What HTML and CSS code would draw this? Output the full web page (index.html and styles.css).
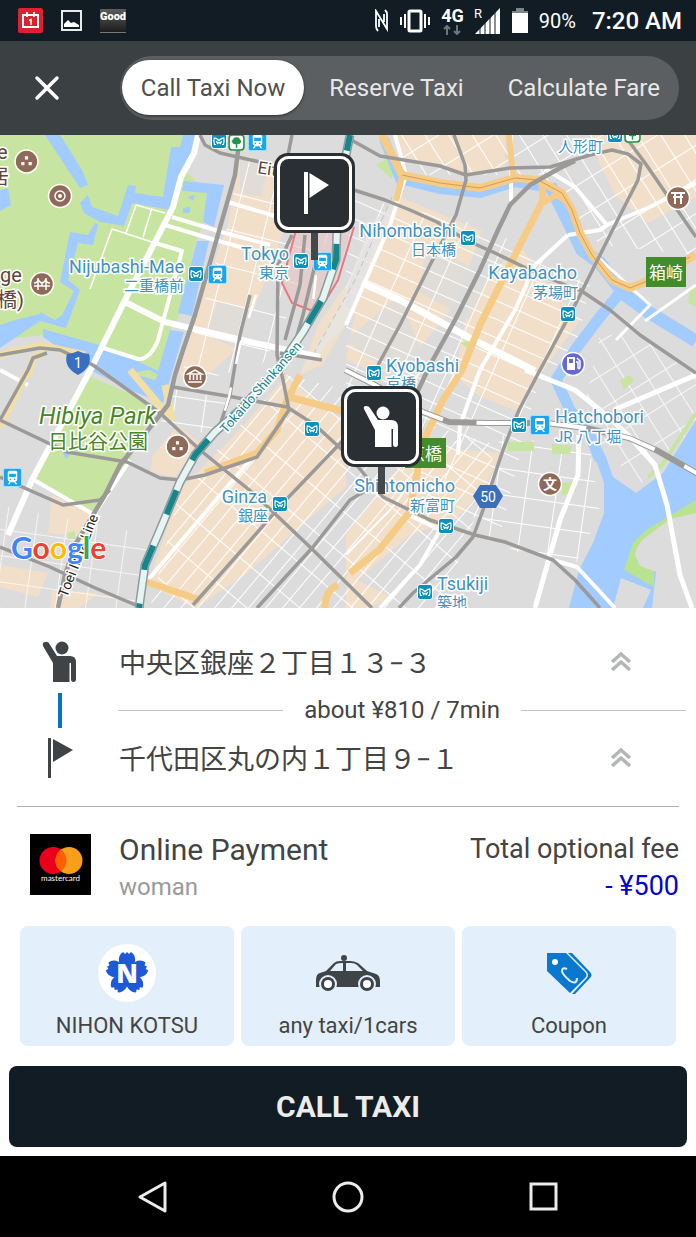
FILE: index.html
```html
<!DOCTYPE html>
<html lang="en">
<head>
  <meta charset="UTF-8" />
  <meta name="viewport" content="width=device-width, initial-scale=1.0">
  <title>Call Taxi</title>

  <link rel="stylesheet" href="styles.css">
</head>
<body>

  <!-- Status bar -->
  <div class="status-bar">
    <div class="status-group">
      <svg width="25" height="25" viewBox="0 0 25 25">
        <rect width="25" height="25" rx="2" fill="#e0202f"/>
        <path d="M5 7H20V19H5ZM9 4V9M16 4V9" fill="none" stroke="#fff" stroke-width="2"/>
        <path d="M11 12.500L13 11.500V17" fill="none" stroke="#fff" stroke-width="1.500"/>
      </svg>
      <svg width="21" height="21" viewBox="0 0 21 21">
        <rect x="1" y="1" width="19" height="19" fill="none" stroke="#e6ebee" stroke-width="2"/>
        <path d="M3 17V14L7 10L10 13L13 12L18 15V17Z" fill="#fff"/>
      </svg>
      <span class="good-app">Good</span>
    </div>
    <div class="status-group status-right">
      <svg width="14" height="23" viewBox="0 0 14 23">
        <path d="M3 22Q1 20 1 17V2L12 20V5Q12 3 10 1M4 10V18M9 13V5" fill="none" stroke="#fff" stroke-width="1.800"/>
      </svg>
      <svg width="32" height="24" viewBox="0 0 32 24">
        <rect x="10" y="2" width="12" height="20" rx="1" fill="none" stroke="#fff" stroke-width="3"/>
        <path d="M6 5V19M2 8V16M26 5V19M30 8V16" stroke="#fff" stroke-width="2"/>
      </svg>
      <div class="network">
        <span>4G</span>
        <svg width="20" height="10" viewBox="0 0 20 10">
          <path d="M5 10V1M2 4L5 1L8 4M15 0V9M12 6L15 9L18 6" fill="none" stroke="#6d767c" stroke-width="2"/>
        </svg>
      </div>
      <svg class="signal" width="27" height="26" viewBox="0 0 27 26">
        <path d="M1 26L26 0V26Z" fill="#fff"/>
        <path d="M6 19V26M11 14V26M16 9V26M21 4V26" stroke="#111c24"/>
        <text class="signal-roaming" x="0" y="10">R</text>
      </svg>
      <svg width="18" height="25" viewBox="0 0 18 25">
        <path d="M5 0H13V3H17V25H1V3H5Z" fill="#fff"/>
        <path d="M5 0H13V3H17V5H1V3H5Z" fill="#7d868b"/>
      </svg>
      <span class="battery">90%</span>
      <span class="clock">7:20 AM</span>
    </div>
  </div>

  <!-- Header tabs -->
  <header class="header">
    <button type="button" class="close-btn" aria-label="Close">
      <svg width="26" height="26" viewBox="0 0 26 26">
        <path d="M3 3L23 23M23 3L3 23" stroke="#fff" stroke-width="3.500" stroke-linecap="round"/>
      </svg>
    </button>
    <nav class="tabs">
      <button type="button" class="tab active">Call Taxi Now</button>
      <button type="button" class="tab">Reserve Taxi</button>
      <button type="button" class="tab">Calculate Fare</button>
    </nav>
  </header>

  <!-- Map -->
  <div class="map">
    <svg viewBox="0 0 696 473">
      <defs>
        <pattern id="gridGinza" width="34" height="13" patternUnits="userSpaceOnUse" patternTransform="rotate(-50)">
          <path d="M0 0H34M0 0V13" stroke="#fff" stroke-width="2" fill="none"/>
        </pattern>
        <pattern id="gridEast" width="42" height="17" patternUnits="userSpaceOnUse" patternTransform="rotate(24)">
          <path d="M0 0H42M0 0V17" stroke="#fff" stroke-width="2" fill="none"/>
        </pattern>
        <pattern id="gridWest" width="31" height="36" patternUnits="userSpaceOnUse" patternTransform="rotate(14)">
          <path d="M0 0H31M0 0V36" stroke="#fff" stroke-width="2" fill="none"/>
        </pattern>
        <pattern id="gridNorth" width="20" height="29" patternUnits="userSpaceOnUse" patternTransform="rotate(-32)">
          <path d="M0 0H20M0 0V29" stroke="#fff" stroke-width="2" fill="none"/>
        </pattern>
        <pattern id="gridSouth" width="30" height="26" patternUnits="userSpaceOnUse" patternTransform="rotate(8)">
          <path d="M0 0H30M0 0V26" stroke="#fff" stroke-width="2" fill="none"/>
        </pattern>
        <symbol id="metro" viewBox="0 0 16 16">
          <rect x=".5" y=".5" width="15" height="15" rx="2.500" fill="#0c90bd" stroke="#fff"/>
          <path d="M5 11.500H3.500Q2.600 7 3.200 4.800Q5.500 4.800 8 7.500Q10.500 4.800 12.800 4.800Q13.400 7 12.500 11.500H11M5.500 8L6.500 10.500L8 9.500L9.500 10.500L10.500 8" fill="none" stroke="#fff" stroke-width="1.200"/>
        </symbol>
        <symbol id="train" viewBox="0 0 20 20">
          <rect x=".5" y=".5" width="19" height="19" rx="2" fill="#1aa5f0" stroke="#a9defa"/>
          <path d="M5 5Q5 3 7 3H13Q15 3 15 5V12Q15 14 13 14L15 17H13L12 15H8L7 17H5L7 14Q5 14 5 12Z" fill="#fff"/>
          <path d="M6.500 6H13.500V9.500H6.500ZM7 11.300H8.500V12.500H7ZM11.500 11.300H13V12.500H11.500Z" fill="#1aa5f0"/>
        </symbol>
        <symbol id="tree" viewBox="0 0 16 16">
          <rect x="1" y="1" width="14" height="14" rx="3" fill="#fff" stroke="#219447" stroke-width="1.500"/>
          <path d="M8 3Q11 3 11 5Q13 6 12 8Q11 10 8.700 9.500V13H7.300V9.500Q5 10 4 8Q3 6 5 5Q5 3 8 3Z" fill="#219447"/>
        </symbol>
        <symbol id="dots" viewBox="0 0 24 24">
          <circle cx="12" cy="12" r="11" fill="#8f6a58" stroke="#fff" stroke-width="1.500"/>
          <path d="M10.500 7H13.500V10H10.500ZM7 12.500H10V15.500H7ZM14 12.500H17V15.500H14Z" fill="#fff"/>
        </symbol>
      </defs>

      <!-- Land -->
      <rect width="696" height="473" fill="#dcdcdc"/>
      <g fill="#f1dfc9">
        <path d="M240 20L300 32L282 100L262 155L235 215L203 245L178 240L205 150L228 90Z"/>
        <path d="M180 355L235 300L287 240L310 262L346 290V352L296 395L245 440L196 473L148 450Z"/>
        <path d="M395 60L482 96L455 170L420 212L380 240L346 225L360 150Z"/>
        <path d="M392 0H505V34L466 39L400 22Z"/>
        <path d="M346 190L322 230L300 240L318 190L346 150Z"/>
        <path d="M590 0H696V62L648 88L615 60L600 30Z"/>
        <path d="M470 160L520 110L548 150L580 185L540 240L520 277L480 262L455 240Z"/>
        <path d="M392 340L432 312L500 318L486 350L455 385L410 400L346 455V400Z"/>
        <path d="M0 430L48 438L38 462L0 452ZM52 360L92 378L86 402L48 398ZM52 455L98 458L80 473H50Z"/>
        <path d="M153 320L178 290L200 308L175 342L150 337Z"/>
        <path d="M346 440L392 462L370 473H346Z"/>
      </g>
      <path d="M425 112L490 140L470 185L420 158ZM346 205L400 160L420 212L385 235ZM240 25L270 20L262 62L240 58ZM262 180L240 215L205 200L218 165Z" fill="#dcdcdc" opacity=".8"/>

      <!-- Minor streets -->
      <path d="M240 20L300 32L340 80L262 230L178 250L228 90Z" fill="url(#gridWest)"/>
      <path d="M180 355L287 240L346 255V473H150Z" fill="url(#gridGinza)"/>
      <path d="M346 60L482 90L590 150L575 220L540 240L500 400L346 300Z" fill="url(#gridEast)"/>
      <path d="M380 0H696V120L600 110L540 40L400 40Z" fill="url(#gridNorth)"/>
      <path d="M346 320L430 290L496 310L480 370L440 473H346Z" fill="url(#gridGinza)"/>
      <path d="M500 300L590 315L600 378L570 440L480 400Z" fill="url(#gridSouth)"/>
      <path d="M600 200L640 200L696 240V290L640 350L580 290Z" fill="url(#gridNorth)" opacity=".8"/>
      <path d="M0 370L150 400L140 473H0Z" fill="url(#gridSouth)" opacity=".7"/>
      <path d="M170 250L230 260L215 300L160 290Z" fill="url(#gridSouth)"/>

      <!-- Parks -->
      <g fill="#c7e5a0">
        <path d="M0 0H198L185 35L207 58L203 88L195 110L180 180L170 195L158 238L100 222L43 200L0 205Z"/>
        <path d="M87 240L155 270L130 325L92 378L32 345Z"/>
        <path d="M508 307H534V316H508ZM552 309L572 311L570 319H552ZM562 348L576 346V357L562 360ZM620 245L630 240L634 246L624 254ZM67 398L75 396V404L68 404ZM690 155L696 150V172L688 168ZM376 30L392 44L394 34L386 24ZM460 207L474 205L468 214Z"/>
      </g>

      <!-- Water -->
      <g fill="#a2cbff">
        <path d="M183 0H198L192 20L180 45L170 75L132 68L124 91L100 87L84 78L80 68L88 60L92 72L118 81L128 50L136 51L135 58L163 62L171 12L180 12Z"/>
        <path d="M45 0H60L82 35L88 50L80 53L70 38Z"/>
        <path d="M184 46L224 50L214 92L203 87L207 58L182 56ZM197 106L209 106L192 181L178 178ZM170 195L184 197L163 268L130 255L92 236L43 202V194L110 213L158 236Z"/>
        <path d="M0 190L40 177L55 185L62 180L74 156L60 147L70 97L88 100L95 88L98 90L93 110L78 108L68 145L80 155L66 193L40 186L0 213Z"/>
        <path d="M0 55L8 53L11 70L0 76ZM187 62L195 60L193 66ZM183 73L190 72V78H183ZM63 318L75 315L66 324Z"/>
        <path d="M583 300L596 325L604 348V378L593 408L579 435L569 473H696V285L663 338L636 358L613 342L606 322L590 290Z"/>
      </g>
      <g fill="none" stroke="#a2cbff">
        <path d="M550 50L570 90L582 115L600 128L625 160L650 178L696 206" stroke-width="13"/>
        <path d="M618 160L600 182L575 215L556 245L570 275L590 300L600 325" stroke-width="11"/>
        <path d="M384 4L400 44L440 54L480 58L515 47L545 52" stroke-width="10"/>
      </g>
      <path d="M0 186L40 177M696 278L662 330L648 342" fill="none" stroke="#c7e5a0" stroke-width="4"/>
      <path d="M696 365L646 395L633 408L624 435L654 452V435L638 428L636 420L646 402L696 380Z" fill="#b9e38f"/>
      <path d="M696 378L670 384L646 402Q636 410 635 420L640 431L656 437L652 473H696ZM621 443L651 455L643 473H613Z" fill="#dcdcdc"/>
      <path d="M130 238L150 235L158 240L155 245Z" fill="#c7e5a0"/>

      <!-- Station area -->
      <path d="M346 70L350 98L335 145L318 178L292 168L282 148L296 95Z" fill="#e8c4c4" opacity=".6"/>
      <path d="M354 92L338 145L318 178L292 168L282 148L296 95" fill="none" stroke="#ec7682" stroke-width="2"/>
      <path d="M370 90L340 170L300 240L346 190L362 150L400 60Z" fill="#e6e5e3" opacity=".8"/>
      <path d="M392 62L355 145L310 225" fill="none" stroke="#c4c1be" stroke-dasharray="6 4"/>

      <!-- Main white roads -->
      <g fill="none" stroke="#fff" stroke-linejoin="round">
        <path d="M198 0L194 18L181 42L173 72L155 107L125 165L92 232L32 345L8 400" stroke-width="6"/>
        <path d="M172 82L225 98L270 110M165 90L215 105L262 118M228 67L275 81" stroke-width="4"/>
        <path d="M125 167L165 187L250 207L320 222" stroke-width="6"/>
        <path d="M155 108L182 116L158 205Q150 225 138 224L100 212" stroke-width="4"/>
        <path d="M126 98L136 70L165 78M152 73L143 102M155 108L112 94L90 154" stroke-width="1.500"/>
        <path d="M362 148L400 165L470 203L535 236" stroke-width="7"/>
        <path d="M395 0L406 40L390 90L346 190M511 0V66M545 34L575 52L607 90L650 72L696 48M568 100L600 95L607 90" stroke-width="4"/>
        <path d="M568 100L535 130L515 175L480 235L460 290L458 320" stroke-width="4"/>
        <path d="M525 235L575 255L600 275L628 300L655 330L667 370L680 440L692 473M616 274L696 240M579 300L578 340L560 385L535 473" stroke-width="5"/>
        <path d="M100 383L34 345M130 325L95 378M148 445L250 325M0 235L28 250" stroke-width="4"/>
        <path d="M590 115L650 170L616 205M645 186L696 150" stroke-width="3"/>
        <path d="M409 380L440 395L420 430L380 473M553 425L577 432L615 473M455 240L430 290" stroke-width="4"/>
        <path d="M346 300L430 230M346 420L390 375L440 310" stroke-width="2"/>
      </g>

      <!-- Highways -->
      <g fill="none" stroke="#f6cb86" stroke-linejoin="round">
        <path d="M382 0L402 40L440 48L480 53L515 43L538 45L562 58L572 75L580 98L592 120L612 145L630 153L650 145L696 120" stroke-width="8"/>
        <path d="M542 48L543 65L520 110L500 150L480 190L462 235L443 265L424 305L409 378L379 415L350 438" stroke-width="7"/>
        <path d="M543 68L556 60L566 66M509 0L513 40M402 42L396 66" stroke-width="6"/>
        <path d="M300 240L289 262L350 278M288 262L277 295L257 318L205 338" stroke-width="7"/>
        <path d="M147 447L200 465M338 450Q325 455 325 473" stroke-width="7"/>
      </g>
      <g fill="none" stroke="#d49d55" stroke-width="1">
        <path d="M402 40L440 48L480 53L515 43L538 45L562 58L572 75L580 98L592 120L612 145L630 153L650 145L690 122"/>
      </g>
      <path d="M0 220L40 210L85 220M28 242L33 223L47 216M28 235L0 292M165 250L172 285L130 235" fill="none" stroke="#f2dfa6" stroke-width="7"/>

      <!-- Rail -->
      <g fill="none" stroke="#9c9a98" stroke-width="3.500" stroke-linejoin="round">
        <path d="M346 2L380 21L440 31L466 40L510 33L550 32L590 20L612 15L628 19L641 29L638 45L610 100L575 170L540 235L519 275L503 315L483 375L473 402L456 422L413 458L399 473"/>
        <path d="M454 0L465 30L466 45L456 80L430 130L400 190L378 230"/>
        <path d="M575 26L560 33L530 50L510 70L498 95L480 135L455 185L430 230L415 262" stroke-width="4.500"/>
        <path d="M628 5L645 28L696 102"/>
        <path d="M354 55L385 65L410 75L437 87L466 105L495 118L530 135L570 152L580 155L610 175L640 200L696 238"/>
        <path d="M200 0L205 10L220 18L260 27L300 35"/>
        <path d="M240 0L235 40L215 110L195 180L183 215L175 240L168 270L160 280L120 330L105 360L75 410L65 440L58 473" stroke-width="4.500"/>
        <path d="M0 220L40 213L60 215L93 230L160 278L200 315L253 358L310 412L372 473"/>
        <path d="M0 285L67 317L127 327L160 343L180 345L205 340L257 322L289 275L283 245L277 220L278 130L292 100"/>
        <path d="M0 285L28 235L33 223L47 218"/>
        <path d="M173 252L233 262L287 272L315 290L350 322L383 362L430 385L475 400L505 407L553 425L575 445L600 473"/>
        <path d="M0 342L63 370L100 365L110 355"/>
        <path d="M0 412L50 432L93 452L143 473"/>
        <path d="M193 470L233 425L283 368L350 298"/>
        <path d="M257 473L313 412L350 365L375 350"/>
        <path d="M292 0L286 30M250 160L240 200L230 260L220 290M305 100L300 150L285 205M315 130L303 180L290 225M280 218L322 225"/>
      </g>
      <path d="M345 235L375 250L423 277L449 287L486 288L546 288L586 293L629 303L656 315L700 340" fill="none" stroke="#9c9a98" stroke-width="6"/>
      <path d="M345 235L375 250L423 277L449 287L486 288L546 288L586 293L629 303L656 315L700 340" fill="none" stroke="#fff" stroke-width="4" stroke-dasharray="38 34"/>
      <path d="M256 160L240 210L229 262L219 295M316 140L311 185L292 215" fill="none" stroke="#fff" stroke-width="2.500" stroke-dasharray="24 24"/>
      <path d="M350 0L338 60L336 125L323 163L303 197L277 235L240 275L215 297L195 320L180 347L160 395L145 430L139 473" fill="none" stroke="#8f9a9a" stroke-width="9" stroke-linejoin="round"/>
      <path d="M350 0L338 60L336 125L323 163L303 197L277 235L240 275L215 297L195 320L180 347L160 395L145 430L139 473" fill="none" stroke="#e6f5f4" stroke-width="6" stroke-linejoin="round"/>
      <path d="M350 0L338 60L336 125L323 163L303 197L277 235L240 275L215 297L195 320L180 347L160 395L145 430L139 473" fill="none" stroke="#17858c" stroke-width="6" stroke-dasharray="26 34" stroke-dashoffset="10"/>

      <!-- Station icons -->
      <use href="#metro" x="211" y="-2" width="16" height="16"/>
      <use href="#tree" x="228" y="-1" width="17" height="17"/>
      <use href="#train" x="248" y="-3" width="19" height="19"/>
      <use href="#metro" x="188" y="131" width="16" height="16"/>
      <use href="#train" x="208" y="130" width="19" height="19"/>
      <use href="#metro" x="293" y="118" width="16" height="16"/>
      <use href="#train" x="313" y="117" width="19" height="19"/>
      <use href="#metro" x="460" y="95" width="16" height="16"/>
      <use href="#metro" x="560" y="171" width="16" height="16"/>
      <use href="#metro" x="366" y="230" width="16" height="16"/>
      <use href="#metro" x="304" y="286" width="16" height="16"/>
      <use href="#metro" x="511" y="282" width="16" height="16"/>
      <use href="#train" x="530" y="280" width="20" height="20"/>
      <use href="#metro" x="438" y="383" width="16" height="16"/>
      <use href="#metro" x="272" y="361" width="16" height="16"/>
      <use href="#metro" x="417" y="449" width="16" height="16"/>
      <use href="#train" x="3" y="333" width="19" height="19"/>
      <use href="#metro" x="607" y="-8" width="16" height="16"/>
      <use href="#tree" x="624" y="-9" width="17" height="17"/>

      <!-- Points of interest -->
      <use href="#dots" x="14" y="14" width="25" height="25"/>
      <use href="#dots" x="165" y="299" width="25" height="25"/>
      <g fill="#8f6a58" stroke="#fff" stroke-width="1.500">
        <circle cx="60" cy="61" r="11.500"/>
        <circle cx="42" cy="149" r="11.500"/>
        <circle cx="195" cy="242" r="11.500"/>
        <circle cx="678" cy="63" r="11.500"/>
        <circle cx="550" cy="349" r="11.500"/>
        <circle cx="573" cy="229" r="11.500" fill="#6468d8"/>
      </g>
      <g fill="none" stroke="#fff" stroke-width="1.500">
        <circle cx="60" cy="61" r="5"/>
        <path d="M34 151H50M38 143V155M46 143V155M34 148Q38 148 38 144Q42 152 46 144Q46 148 50 148M42 148V151"/>
        <path d="M188 247H202M190 245V240M193.500 245V240M197 245V240M200.500 245V240M188 239L195 235L202 239Z"/>
        <path d="M671 58H685M673 62H683M675 58V69M681 58V69" stroke-width="2"/>
        <path d="M576 227H578V233Q580 235 580 231V226L577 223"/>
      </g>
      <path d="M567 222H575V235H567Z" fill="#fff"/>
      <path d="M569 224H573V228H569Z" fill="#6468d8"/>
      <circle cx="60" cy="61" r="2" fill="#fff"/>
      <text class="poi-glyph" x="550" y="354">文</text>

      <path d="M67 219Q72 219 78 216Q84 219 89 219Q93 232 78 240Q63 232 67 219Z" fill="#3a6fc0"/>
      <text class="shield" x="78" y="233">1</text>
      <path d="M473 361L480 350H496L503 361L496 373H480Z" fill="#3a6fc0"/>
      <text class="shield" x="488" y="367">50</text>
      <rect x="646" y="122" width="40" height="30" fill="#418c2b"/>
      <text class="exit" x="666" y="144">箱崎</text>
      <rect x="405" y="303" width="41" height="30" fill="#418c2b"/>
      <text class="exit" x="425" y="325">京橋</text>

      <!-- Labels -->
      <g class="station end">
        <text x="184" y="138">Nijubashi-Mae</text>
        <text class="ja" x="184" y="156">二重橋前</text>
        <text x="289" y="125">Tokyo</text>
        <text class="ja" x="289" y="143">東京</text>
        <text x="456" y="102">Nihombashi</text>
        <text class="ja" x="456" y="120">日本橋</text>
        <text x="577" y="144">Kayabacho</text>
        <text class="ja" x="578" y="163">茅場町</text>
        <text class="ja" x="603" y="17">人形町</text>
        <text x="267" y="368">Ginza</text>
        <text class="ja" x="268" y="386">銀座</text>
        <text x="455" y="357">Shintomicho</text>
        <text class="ja" x="455" y="376">新富町</text>
      </g>
      <g class="station">
        <text x="386" y="237">Kyobashi</text>
        <text class="ja" x="386" y="254">京橋</text>
        <text x="555" y="288">Hatchobori</text>
        <text class="ja" x="555" y="307">JR 八丁堀</text>
        <text x="437" y="455">Tsukiji</text>
        <text class="ja" x="437" y="473">築地</text>
      </g>
      <g class="place">
        <text x="-3" y="24">e</text>
        <text x="-11" y="49">居</text>
        <text x="0" y="147">ge</text>
        <text x="-3" y="172">橋)</text>
        <text class="road-name" transform="translate(257 38) rotate(9)">Eitai</text>
      </g>
      <text class="park" x="39" y="289">Hibiya Park</text>
      <text class="park-ja" x="48" y="314">日比谷公園</text>
      <text class="line-name" transform="translate(226 299) rotate(-49)">Tokaido Shinkansen</text>
      <text class="line-name dark" transform="translate(67 463) rotate(-69)">Toei Mita Line</text>
      <text class="google" x="11" y="424"><tspan fill="#4285f4">G</tspan><tspan fill="#ea4335">o</tspan><tspan fill="#fbbc05">o</tspan><tspan fill="#4285f4">g</tspan><tspan fill="#34a853">l</tspan><tspan fill="#ea4335">e</tspan></text>

      <!-- Pins -->
      <rect x="311" y="96" width="7" height="29" fill="#44484b"/>
      <rect x="274" y="18" width="81" height="80" rx="14" fill="#2a2f33"/>
      <rect x="278.500" y="22.500" width="72" height="71" rx="10" fill="#2a2f33" stroke="#fff" stroke-width="3"/>
      <path d="M304 37H308V79H304ZM309.500 38L329 50L309.500 63Z" fill="#fff"/>
      <rect x="378" y="330" width="7" height="29" fill="#44484b"/>
      <rect x="341" y="251" width="81" height="81" rx="14" fill="#2a2f33"/>
      <rect x="345.500" y="255.500" width="72" height="72" rx="10" fill="#2a2f33" stroke="#fff" stroke-width="3"/>
      <g fill="#fff">
        <circle cx="383" cy="278" r="6.500"/>
        <path d="M364 274Q363 271 366 271Q369 271 370 273L378 285H391Q398 285 398 292V309Q398 312 395.500 312Q393 312 393 309V294H391.500V312H375V295Z"/>
      </g>
    </svg>
  </div>

  <!-- Order sheet -->
  <main class="sheet">
    <section class="route">
      <svg class="route-icon" width="36" height="42" viewBox="0 0 36 42">
        <g fill="#3f4447">
          <circle cx="20" cy="7" r="6.500"/>
          <path d="M1 5Q0 1 3.500 1Q6 0 7.500 3L15 15H28Q34 15 34 21V38Q34 41 31.500 41Q29 41 29 38V22H27.500V41H11V22Z"/>
        </g>
      </svg>
      <span class="address">中央区銀座２丁目１３−３</span>
      <button type="button" class="expand-btn" aria-label="Show pickup options">
        <svg width="22" height="22" viewBox="0 0 22 22">
          <path d="M2 11L11 3L20 11M2 19L11 11L20 19" fill="none" stroke="#b4b6b7" stroke-width="3.500"/>
        </svg>
      </button>

      <span class="route-line"></span>
      <div class="estimate">about ¥810 / 7min</div>

      <svg class="route-icon" width="26" height="42" viewBox="0 0 26 42">
        <path d="M1 1H4V41H1ZM6 2L26 13L6 25Z" fill="#3f4447"/>
      </svg>
      <span class="address">千代田区丸の内１丁目９−１</span>
      <button type="button" class="expand-btn" aria-label="Show destination options">
        <svg width="22" height="22" viewBox="0 0 22 22">
          <path d="M2 11L11 3L20 11M2 19L11 11L20 19" fill="none" stroke="#b4b6b7" stroke-width="3.500"/>
        </svg>
      </button>
    </section>

    <section class="payment">
      <div class="card-logo">
        <svg width="44" height="27" viewBox="0 0 44 27">
          <circle cx="14" cy="13.500" r="13.500" fill="#eb001b"/>
          <circle cx="30" cy="13.500" r="13.500" fill="#f79e1b"/>
          <path d="M22 2.600A13.500 13.500 0 0 1 22 24.400A13.500 13.500 0 0 1 22 2.600Z" fill="#ff5f00"/>
        </svg>
        <span>mastercard</span>
      </div>
      <div class="payment-method">
        <h2>Online Payment</h2>
        <p>woman</p>
      </div>
      <div class="fee">
        <p>Total optional fee</p>
        <p class="fee-amount">- ¥500</p>
      </div>
    </section>

    <!-- Options -->
    <section class="options">
      <button type="button" class="option">
        <svg width="58" height="58" viewBox="0 0 58 58">
          <circle cx="29" cy="29" r="29" fill="#fff"/>
          <g fill="#1d59d8">
            <path id="petal" d="M29 30L21 18Q20 11 25 8L27 10L29 8L31 10L33 8Q38 11 37 18Z"/>
            <use href="#petal" transform="rotate(72 29 29)"/>
            <use href="#petal" transform="rotate(144 29 29)"/>
            <use href="#petal" transform="rotate(216 29 29)"/>
            <use href="#petal" transform="rotate(288 29 29)"/>
            <circle cx="29" cy="29" r="12"/>
          </g>
          <text class="kotsu-mark" x="29" y="39">N</text>
        </svg>
        <span>NIHON KOTSU</span>
      </button>
      <button type="button" class="option">
        <svg width="64" height="58" viewBox="0 0 64 58">
          <g fill="#3f4447">
            <circle cx="28" cy="14" r="3"/>
            <path d="M18 19Q20 17 24 17H34Q38 17 42 19L51 27L60 30Q64 31 64 38V43H0V36Q0 30 4 29L10 27Z"/>
          </g>
          <path d="M14 27L20 20Q22 19 27 19V27ZM30 19H35Q39 19 41 21L47 27H30Z" fill="#e3effa"/>
          <g fill="#3f4447" stroke="#e3effa" stroke-width="2">
            <circle cx="12" cy="40" r="8"/>
            <circle cx="51" cy="40" r="8"/>
          </g>
          <circle cx="12" cy="40" r="4" fill="#fff"/>
          <circle cx="51" cy="40" r="4" fill="#fff"/>
        </svg>
        <span>any taxi/1cars</span>
      </button>
      <button type="button" class="option">
        <svg width="46" height="58" viewBox="0 0 46 58">
          <g fill="#0a78cf">
            <path d="M1 9H20L39 28Q42 31 39 34L24 49L1 27Z"/>
            <path d="M22 9H26L44 28Q47 31 44 34L29 50H26L41 34Q43 31 41 28Z"/>
          </g>
          <circle cx="9" cy="18" r="3" fill="#fff"/>
          <path d="M21 25Q16 23 16 27Q16 30 24 37Q31 41 31 34" fill="none" stroke="#e3effa" stroke-width="2"/>
        </svg>
        <span>Coupon</span>
      </button>
    </section>

    <button type="button" class="call-btn">CALL TAXI</button>
  </main>

  <!-- System navigation -->
  <nav class="system-nav">
    <button type="button" aria-label="Back">
      <svg width="34" height="34" viewBox="0 0 34 34">
        <path d="M29 3V31L4 17Z" fill="none" stroke="#ececec" stroke-width="3" stroke-linejoin="round"/>
      </svg>
    </button>
    <button type="button" aria-label="Home">
      <svg width="34" height="34" viewBox="0 0 34 34">
        <circle cx="17" cy="17" r="14" fill="none" stroke="#ececec" stroke-width="3"/>
      </svg>
    </button>
    <button type="button" aria-label="Recent apps">
      <svg width="34" height="34" viewBox="0 0 34 34">
        <rect x="5" y="4" width="25" height="25" fill="none" stroke="#ececec" stroke-width="3"/>
      </svg>
    </button>
  </nav>

</body>
</html>
```
FILE: styles.css
```css
:root {
  --dark: #111c24;
  --header: #3b4043;
  --pill: #5b5f61;
  --text-primary: #444444;
  --text-secondary: #9a9a9a;
  --blue: #0a72c0;
  --card: #e3effa;
  --border: #c4c4c4;
  --radius: 8px;
  --font: Roboto, "Noto Sans CJK JP", sans-serif;
}

* {
  box-sizing: border-box;
  margin: 0;
  padding: 0;
}

body {
  font-family: var(--font);
  background: #ffffff;
  color: var(--text-primary);
}

button {
  border: none;
  background: none;
  color: inherit;
  font-family: inherit;
  cursor: pointer;
}

svg {
  display: block;
}

/* Status bar */
.status-bar {
  display: flex;
  justify-content: space-between;
  align-items: center;
  height: 41px;
  padding: 0 14px 0 18px;
  background: var(--dark);
  color: #ffffff;
}

.status-group {
  display: flex;
  align-items: center;
  gap: 18px;
}

.status-right {
  gap: 10px;
}

.good-app {
  height: 24px;
  background: linear-gradient(#5c5c5c, #1c1c1c);
  border-bottom: 1px solid #777777;
  font-size: 11px;
  font-weight: 900;
  line-height: 16px;
}

.network {
  display: flex;
  flex-direction: column;
  align-items: center;
  font-size: 18px;
  font-weight: 700;
  line-height: 18px;
}

.signal {
  overflow: visible;
}

.signal-roaming {
  fill: #ffffff;
  font-size: 13px;
}

.battery {
  font-size: 20px;
}

.clock {
  margin-left: 6px;
  font-size: 24px;
  font-weight: 500;
}

/* Header */
.header {
  display: flex;
  align-items: center;
  justify-content: space-between;
  height: 94px;
  padding: 0 17px 0 34px;
  background: var(--header);
}

.tabs {
  display: flex;
  gap: 6px;
  padding: 4px 0 5px 2px;
  background: var(--pill);
  border-radius: 32px;
}

.tab {
  height: 55px;
  padding: 0 19px;
  border-radius: 28px;
  color: #e8e8e8;
  font-size: 24px;
}

.tab.active {
  background: #ffffff;
  box-shadow: 0 1px 3px rgba(0, 0, 0, 0.5);
  color: #505050;
}

/* Map */
.map svg {
  width: 100%;
  height: auto;
}

.map text {
  font-family: var(--font);
  paint-order: stroke;
}

.station {
  fill: #3f93bf;
  stroke: #ffffff;
  stroke-width: 3px;
  font-size: 18px;
}

.station .ja {
  font-size: 15px;
}

.end {
  text-anchor: end;
}

.place {
  fill: #5f4438;
  stroke: #ffffff;
  stroke-width: 3px;
  font-size: 20px;
}

.road-name {
  font-size: 17px;
}

.park,
.park-ja {
  fill: #4a8526;
  stroke: #ffffff;
  stroke-width: 3px;
  font-size: 24px;
  font-style: italic;
}

.park-ja {
  font-size: 20px;
  font-style: normal;
}

.line-name {
  fill: #17858c;
  stroke: #ffffff;
  stroke-width: 3px;
  font-size: 13px;
}

.line-name.dark {
  fill: #222222;
  font-size: 14px;
}

.poi-glyph,
.shield,
.exit {
  fill: #ffffff;
  text-anchor: middle;
  font-size: 14px;
}

.poi-glyph {
  font-weight: 700;
}

.exit {
  font-size: 17px;
}

.map .google {
  stroke: #ffffff;
  stroke-width: 2px;
  font-family: Lato, sans-serif;
  font-size: 30px;
  font-weight: 700;
}

/* Route */
.route {
  display: grid;
  grid-template-columns: 86px 1fr 116px;
  grid-template-rows: 48px 48px 48px;
  align-items: center;
  margin: 0 17px;
  padding: 30px 0 24px;
  border-bottom: 1px solid #b0b0b0;
}

.route-icon,
.route-line {
  justify-self: center;
}

.route-line {
  width: 4px;
  height: 35px;
  background: var(--blue);
}

.address {
  padding: 4px 0 0 16px;
  font-size: 27px;
  line-height: 40px;
}

.expand-btn {
  justify-self: center;
}

.estimate {
  grid-column: 2 / 4;
  display: flex;
  align-items: center;
  gap: 21px;
  margin: 0 -7px 0 15px;
  font-size: 24px;
}

.estimate::before,
.estimate::after {
  content: "";
  flex: 1;
  height: 1px;
  background: var(--border);
}

/* Payment */
.payment {
  display: flex;
  align-items: flex-start;
  padding: 24px 17px 21px 30px;
}

.card-logo {
  display: flex;
  flex-direction: column;
  align-items: center;
  justify-content: center;
  width: 61px;
  height: 61px;
  margin-top: 3px;
  background: #000000;
  color: #ffffff;
  font-family: Lato, sans-serif;
  font-size: 8px;
  line-height: 8px;
}

.payment-method {
  flex: 1;
  padding-left: 28px;
}

.payment-method h2 {
  font-size: 30px;
  font-weight: 400;
  line-height: 38px;
}

.payment-method p {
  color: var(--text-secondary);
  font-size: 24px;
  line-height: 36px;
}

.fee {
  font-size: 27px;
  line-height: 37px;
  text-align: right;
}

.fee-amount {
  color: #0404d0;
}

/* Options */
.options {
  display: grid;
  grid-template-columns: repeat(3, 1fr);
  gap: 7px;
  padding: 0 20px;
}

.option {
  display: flex;
  flex-direction: column;
  align-items: center;
  gap: 10px;
  height: 120px;
  padding-top: 18px;
  background: var(--card);
  border-radius: var(--radius);
  font-size: 22px;
  line-height: 28px;
}

.kotsu-mark {
  fill: #ffffff;
  font-family: "Open Sans", sans-serif;
  font-size: 26px;
  font-weight: 800;
  text-anchor: middle;
}

.call-btn {
  display: block;
  width: calc(100% - 18px);
  height: 81px;
  margin: 20px 9px 9px;
  background: var(--dark);
  border-radius: var(--radius);
  color: #ececec;
  font-size: 30px;
  font-weight: 700;
}

/* System navigation */
.system-nav {
  display: grid;
  grid-template-columns: repeat(3, 1fr);
  justify-items: center;
  align-items: center;
  height: 81px;
  padding: 0 8%;
  background: #000000;
}
```
